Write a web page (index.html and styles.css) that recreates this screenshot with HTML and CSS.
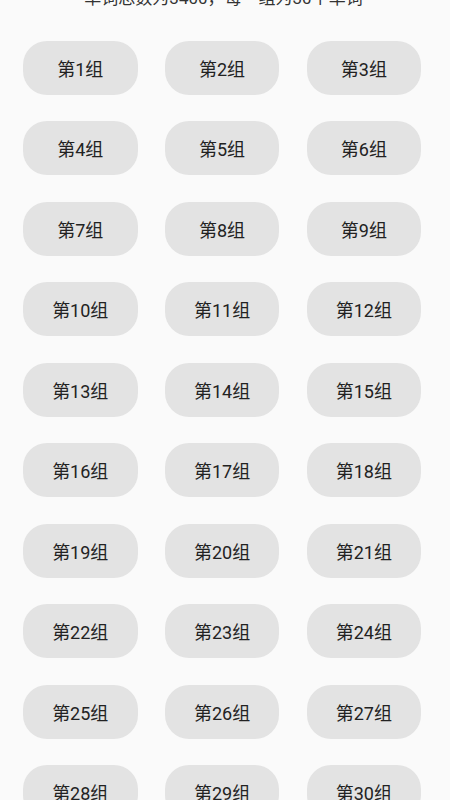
FILE: index.html
```html
<!DOCTYPE html>
<html lang="zh-CN">
<head>
    <meta charset="UTF-8">
    <meta name="viewport" content="width=device-width, initial-scale=1.0">
    <title>单词分组</title>
    <link rel="stylesheet" href="styles.css">
</head>
<body>
    <div class="page">
        <p class="summary">单词总数为3400，每一组为30个单词</p>
        <div class="groups">
            <button class="group">第1组</button>
            <button class="group">第2组</button>
            <button class="group">第3组</button>
            <button class="group">第4组</button>
            <button class="group">第5组</button>
            <button class="group">第6组</button>
            <button class="group">第7组</button>
            <button class="group">第8组</button>
            <button class="group">第9组</button>
            <button class="group">第10组</button>
            <button class="group">第11组</button>
            <button class="group">第12组</button>
            <button class="group">第13组</button>
            <button class="group">第14组</button>
            <button class="group">第15组</button>
            <button class="group">第16组</button>
            <button class="group">第17组</button>
            <button class="group">第18组</button>
            <button class="group">第19组</button>
            <button class="group">第20组</button>
            <button class="group">第21组</button>
            <button class="group">第22组</button>
            <button class="group">第23组</button>
            <button class="group">第24组</button>
            <button class="group">第25组</button>
            <button class="group">第26组</button>
            <button class="group">第27组</button>
            <button class="group">第28组</button>
            <button class="group">第29组</button>
            <button class="group">第30组</button>
        </div>
    </div>
</body>
</html>
```

FILE: styles.css
```css
html, body {
    margin: 0;
    background: #fafafa;
    font-family: Roboto, "Noto Sans CJK SC", sans-serif;
    overflow: hidden;
    height: 800px;
}
.page {
    padding: 0 29px 0 23px;
}
.summary {
    margin: -14px 0 0;
    line-height: 24px;
    font-size: 17px;
    color: #333;
    text-align: center;
    padding-left: 3px;
}
.groups {
    margin-top: 31px;
    display: grid;
    grid-template-columns: repeat(3, 114.5px);
    column-gap: 27.3px;
    row-gap: 26.44px;
}
.group {
    height: 54px;
    border: none;
    border-radius: 24px;
    background: #e3e3e3;
    color: #222;
    font-family: inherit;
    font-size: 18px;
    padding: 0;
    cursor: pointer;
}
```
